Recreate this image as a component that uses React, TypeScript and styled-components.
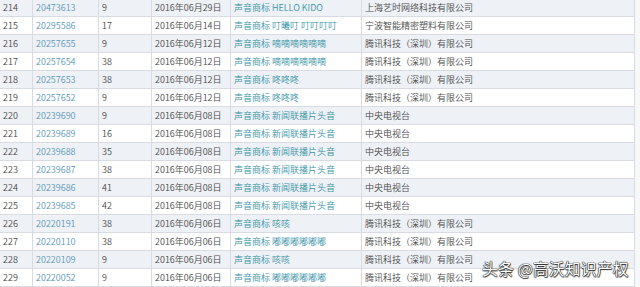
import React from "react";
import styled, { createGlobalStyle } from "styled-components";

const Global = createGlobalStyle`
  html, body { margin: 0; padding: 0; background: #ffffff; }
  body { font-family: "Noto Sans", "Noto Sans CJK SC", sans-serif; overflow: hidden; }
`;

const Page = styled.div`
  position: relative;
  width: 640px;
  height: 287px;
  overflow: hidden;
  background: #f7f8fa;
`;

const Table = styled.div`
  display: flex;
  flex-direction: column;
  width: 635px;
  margin-top: -1px;
`;

const Row = styled.div<{ $shaded: boolean }>`
  display: grid;
  grid-template-columns: 33px 66px 53px 79px 131px 273px;
  height: 18px;
  box-sizing: border-box;
  border-bottom: 1px solid #d8dce2;
  background: ${(p) => (p.$shaded ? "#eef1f6" : "#ffffff")};
`;

const Cell = styled.div<{ $tone?: "plain" | "link" | "mark" }>`
  box-sizing: border-box;
  border-right: 1px solid #d8dce2;
  padding-left: 3px;
  font-family: "Noto Sans CJK SC", "Noto Sans", sans-serif;
  font-size: 9px;
  font-weight: 350;
  line-height: 17px;
  white-space: nowrap;
  overflow: hidden;
  color: ${(p) =>
    p.$tone === "link" ? "#5a98b6" : p.$tone === "mark" ? "#3a94a8" : "#4a4a4a"};
`;

const Watermark = styled.div`
  position: absolute;
  left: 482px;
  top: 258px;
  font-family: "Noto Sans CJK SC", sans-serif;
  font-size: 15.8px;
  line-height: 22px;
  letter-spacing: 0.2px;
  color: #ffffff;
  white-space: nowrap;
  text-shadow: 0 0 1px #222, 0 0 1px #222, 0 0 1px #222, 0.5px 0.5px 1px #333;
`;

type Item = [string, string, string, string, string, string];

const rows: Item[] = [
  ["214", "20473613", "9", "2016年06月29日", "声音商标 HELLO KIDO", "上海艺时网络科技有限公司"],
  ["215", "20295586", "17", "2016年06月14日", "声音商标 叮曦叮 叮叮叮叮", "宁波智能精密塑料有限公司"],
  ["216", "20257655", "9", "2016年06月12日", "声音商标 嘀嘀嘀嘀嘀嘀", "腾讯科技（深圳）有限公司"],
  ["217", "20257654", "38", "2016年06月12日", "声音商标 嘀嘀嘀嘀嘀嘀", "腾讯科技（深圳）有限公司"],
  ["218", "20257653", "38", "2016年06月12日", "声音商标 咚咚咚", "腾讯科技（深圳）有限公司"],
  ["219", "20257652", "9", "2016年06月12日", "声音商标 咚咚咚", "腾讯科技（深圳）有限公司"],
  ["220", "20239690", "9", "2016年06月08日", "声音商标 新闻联播片头音", "中央电视台"],
  ["221", "20239689", "16", "2016年06月08日", "声音商标 新闻联播片头音", "中央电视台"],
  ["222", "20239688", "35", "2016年06月08日", "声音商标 新闻联播片头音", "中央电视台"],
  ["223", "20239687", "38", "2016年06月08日", "声音商标 新闻联播片头音", "中央电视台"],
  ["224", "20239686", "41", "2016年06月08日", "声音商标 新闻联播片头音", "中央电视台"],
  ["225", "20239685", "42", "2016年06月08日", "声音商标 新闻联播片头音", "中央电视台"],
  ["226", "20220191", "38", "2016年06月06日", "声音商标 咳咳", "腾讯科技（深圳）有限公司"],
  ["227", "20220110", "38", "2016年06月06日", "声音商标 嘟嘟嘟嘟嘟嘟", "腾讯科技（深圳）有限公司"],
  ["228", "20220109", "9", "2016年06月06日", "声音商标 咳咳", "腾讯科技（深圳）有限公司"],
  ["229", "20220052", "9", "2016年06月06日", "声音商标 嘟嘟嘟嘟嘟嘟", "腾讯科技（深圳）有限公司"],
];

export default function App() {
  return (
    <Page>
      <Global />
      <Table>
        {rows.map((r, i) => (
          <Row key={r[0]} $shaded={i % 2 === 0}>
            <Cell>{r[0]}</Cell>
            <Cell $tone="link">{r[1]}</Cell>
            <Cell>{r[2]}</Cell>
            <Cell>{r[3]}</Cell>
            <Cell $tone="mark">{r[4]}</Cell>
            <Cell>{r[5]}</Cell>
          </Row>
        ))}
      </Table>
      <Watermark>头条 @高沃知识产权</Watermark>
    </Page>
  );
}
